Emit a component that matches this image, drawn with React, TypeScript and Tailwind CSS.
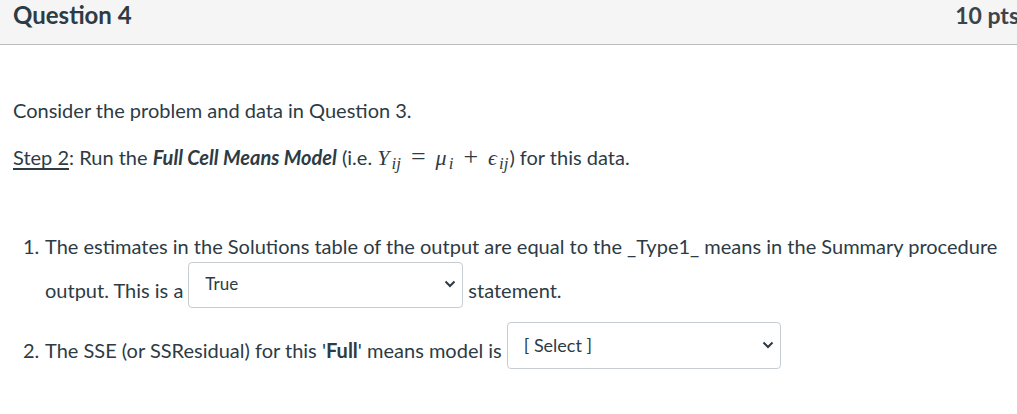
export default function App() {
  // little chevron for the dropdowns
  const Chevron = () => (
    <svg width="12" height="8" viewBox="0 0 12 8" className="shrink-0">
      <path d="M1.5 1.5 L6 6 L10.5 1.5" fill="none" stroke="#2d3b45" strokeWidth="2" />
    </svg>
  );

  return (
    <main
      className="w-full h-screen overflow-hidden bg-white text-[#2d3b45]"
      style={{ fontFamily: "Lato, 'Noto Sans', sans-serif" }}
    >
      {/* header */}
      <div className="h-[45px] flex items-center justify-between pl-[13px] pr-0 bg-[#f5f5f5] border-b border-[#b8bcbf]">
        <h2 className="text-[24px] font-bold leading-none -mt-[14px]">Question 4</h2>
        <span className="text-[23px] font-bold text-[#3d4449] leading-none -mt-[14px] -mr-[2px]">10 pts</span>
      </div>

      <div className="pl-[13px] pt-[51px] text-[20px] leading-[28px]">
        <p>Consider the problem and data in Question 3.</p>

        <p className="mt-[19px]">
          <span className="underline underline-offset-[3px]">Step 2</span>: Run the{" "}
          <strong className="italic">Full Cell Means Model</strong> (i.e.{" "}
          <span className="text-[22px] leading-none" style={{ fontFamily: "'Liberation Serif', 'DejaVu Serif', serif" }}>
            <i>Y</i>
            <sub className="text-[17px] leading-none ml-[2px]"><i>ij</i></sub>
            <span className="text-[26px] mx-[10px]">=</span>
            <i>μ</i>
            <sub className="text-[17px] leading-none ml-[2px]"><i>i</i></sub>
            <span className="text-[26px] mx-[10px]">+</span>
            <i>ϵ</i>
            <sub className="text-[17px] leading-none ml-[2px] mr-[1px]"><i>ij</i></sub>
          </span>
          ) for this data.
        </p>

        {/* questions */}
        <div className="mt-[61px] pl-[10px]">
          <div className="flex">
            <span className="w-[22px] shrink-0">1.</span>
            <div>
              <div>The estimates in the Solutions table of the output are equal to the _Type1_ means in the Summary procedure</div>
              <div className="flex items-center mt-[2px]">
                <span className="pt-[9px]">output. This is a</span>
                <div className="ml-[5px] w-[275px] h-[46px] flex items-center justify-between pl-[16px] pr-[6px] pb-[2px] border border-[#c7cdd1] rounded-[4px] bg-white">
                  <span className="text-[17px]">True</span>
                  <Chevron />
                </div>
                <span className="ml-[5px] pt-[9px]">statement.</span>
              </div>
            </div>
          </div>

          <div className="flex items-center mt-[14px]">
            <span className="w-[22px] shrink-0 pt-[9px]">2.</span>
            <span className="pt-[9px]">
              The SSE (or SSResidual) for this '<strong>Full</strong>' means model is
            </span>
            <div className="ml-[5px] w-[274px] h-[47px] flex items-center justify-between pl-[16px] pr-[6px] pb-[2px] border border-[#c7cdd1] rounded-[4px] bg-white">
              <span className="text-[18px]">[ Select ]</span>
              <Chevron />
            </div>
          </div>
        </div>
      </div>
    </main>
  );
}
